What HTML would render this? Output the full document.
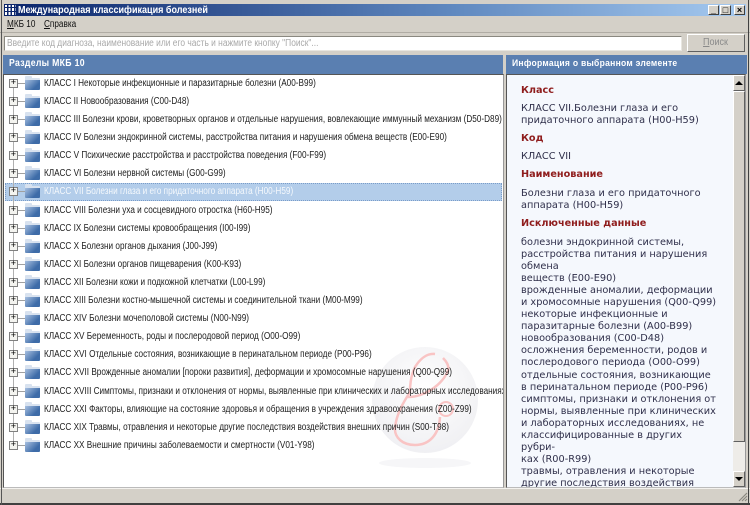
<!DOCTYPE html>
<html lang="ru"><head><meta charset="utf-8"><title>Международная классификация болезней</title>
<style>
html,body{margin:0;padding:0;width:750px;height:505px;overflow:hidden;background:#d4d0c8}
*{box-sizing:border-box}
body{font-family:"Liberation Sans",sans-serif;position:relative}
.a{position:absolute}
.t{position:absolute;white-space:nowrap;transform-origin:0 50%}
#title{left:4px;top:4px;width:742px;height:12px;background:linear-gradient(90deg,#0a246a,#5f88bf 60%,#a6caf0)}
.wb{position:absolute;top:5px;width:11px;height:10px;background:#d4d0c8;border:1px solid;border-color:#fff #404040 #404040 #fff;color:#000;font-size:9px;line-height:8px;text-align:center;font-weight:bold}
.row{position:absolute;left:44px;width:560px;overflow:hidden;height:14px;font-size:10px;line-height:14px;white-space:nowrap;color:#222;transform:scaleX(.82);transform-origin:0 50%}
.f{position:absolute;left:25px;width:15px;height:12px;border-radius:1px;background:linear-gradient(135deg,#a8c0e0,#3e6ca8 70%);border-top:2px solid #d8e2ef}
.f:before{content:"";position:absolute;left:0;top:-4px;width:7px;height:3px;background:#d8e2ef;border-radius:1px 1px 0 0}
.p{position:absolute;left:9px;width:9px;height:9px;border:1px solid #808080;background:#f4f4f0;color:#000;font:9px/7px "Liberation Mono",monospace;text-align:center}
.d{position:absolute;left:18px;width:7px;height:1px;background:#a0a0a0}
.h{position:absolute;left:521px;font:bold 9.7px/12px "DejaVu Sans",sans-serif;color:#8f1d1d;white-space:nowrap}
.b{position:absolute;left:521px;font:9.75px/12.05px "DejaVu Sans",sans-serif;color:#2f2f4a;white-space:nowrap}
</style></head><body>

<div class="a" id="title"></div>
<div class="a" style="left:5px;top:5px;width:11px;height:10px;background:repeating-linear-gradient(90deg,#fff 0 2px,transparent 2px 3.5px)"></div>
<div class="a" style="left:5px;top:7px;width:11px;height:1px;background:#0a246a"></div>
<div class="a" style="left:5px;top:11px;width:11px;height:1px;background:#0a246a"></div>
<div class="t" style="left:18px;top:3px;font:bold 10.5px/14px 'Liberation Sans',sans-serif;color:#fff;transform:scaleX(.86)">Международная классификация болезней</div>
<div class="wb" style="left:708px">_</div><div class="wb" style="left:720px">□</div><div class="wb" style="left:734px">×</div>

<div class="t" style="left:7px;top:17px;font-size:10px;line-height:15px;color:#111;transform:scaleX(.82)"><u>М</u>КБ 10</div>
<div class="t" style="left:44px;top:17px;font-size:10px;line-height:15px;color:#111;transform:scaleX(.82)"><u>С</u>правка</div>
<div class="a" style="left:0;top:32px;width:750px;height:1px;background:#b0aca4"></div>

<div class="a" style="left:4px;top:36px;width:678px;height:15px;background:#fff;border:1px solid;border-color:#8a8880 #e8e6e0 #e8e6e0 #8a8880"></div>
<div class="t" style="left:7px;top:36px;font-size:10px;line-height:15px;color:#a9a9a9;transform:scaleX(.84)">Введите код диагноза, наименование или его часть и нажмите кнопку "Поиск"...</div>
<div class="a" style="left:687px;top:34px;width:58px;height:18px;background:#d4d0c8;border:1px solid;border-color:#fff #606060 #606060 #fff"></div>
<div class="t" style="left:703px;top:36px;font-size:10px;line-height:14px;color:#8a8a8a;transform:scaleX(.9)"><u>П</u>оиск</div>

<div class="a" style="left:3px;top:55px;width:500px;height:19px;background:#5a7fb1"></div>
<div class="t" style="left:9px;top:56px;font:bold 10px/16px 'Liberation Sans',sans-serif;color:#fff;letter-spacing:.35px;transform:scaleX(.87)">Разделы МКБ 10</div>
<div class="a" style="left:506px;top:55px;width:241px;height:19px;background:#5a7fb1"></div>
<div class="t" style="left:512px;top:56px;font:bold 9.5px/16px 'Liberation Sans',sans-serif;color:#fff;letter-spacing:.3px;transform:scaleX(.9)">Информация о выбранном элементе</div>

<div class="a" style="left:3px;top:74px;width:501px;height:414px;background:#fff;border:1px solid;border-color:#555 #999 #bbb #555;overflow:hidden"></div>

<svg class="a" style="left:355px;top:335px" width="130" height="140" viewBox="0 0 130 140">
<defs><radialGradient id="g" cx=".5" cy=".4" r=".6"><stop offset="0" stop-color="#fff"/><stop offset="1" stop-color="#f0f0f3"/></radialGradient></defs>
<ellipse cx="70" cy="128" rx="46" ry="5" fill="#f6f6f8"/>
<circle cx="70" cy="65" r="53" fill="url(#g)"/>
<path d="M80 19C72 18 65 24 60 32C56 40 55 50 55 57C48 68 42 78 40 92C39 103 48 110 60 110C74 110 84 100 85 82M88 23C93 28 95 33 92 38C88 46 78 56 65 60C60 62 56 62 52 62" fill="none" stroke="#f9c4c4" stroke-width="2.5"/>
<circle cx="91" cy="74" r="7" fill="none" stroke="#f9c4c4" stroke-width="2"/>
</svg>

<div class="a" style="left:5px;top:183px;width:497px;height:18px;background:#b3cdea;border:1px dotted #7a9cc8"></div>
<div class="a" style="left:13px;top:83px;width:1px;height:362px;background:#b0b0b0"></div>

<div class="p" style="top:79px">+</div><div class="d" style="top:83px"></div><div class="f" style="top:78px"></div><div class="row" style="top:77px">КЛАСС I Некоторые инфекционные и паразитарные болезни (A00-B99)</div>
<div class="p" style="top:97px">+</div><div class="d" style="top:101px"></div><div class="f" style="top:96px"></div><div class="row" style="top:95px">КЛАСС II Новообразования (C00-D48)</div>
<div class="p" style="top:115px">+</div><div class="d" style="top:119px"></div><div class="f" style="top:114px"></div><div class="row" style="top:113px">КЛАСС III Болезни крови, кроветворных органов и отдельные нарушения, вовлекающие иммунный механизм (D50-D89)</div>
<div class="p" style="top:133px">+</div><div class="d" style="top:137px"></div><div class="f" style="top:132px"></div><div class="row" style="top:131px">КЛАСС IV Болезни эндокринной системы, расстройства питания и нарушения обмена веществ (E00-E90)</div>
<div class="p" style="top:151px">+</div><div class="d" style="top:155px"></div><div class="f" style="top:150px"></div><div class="row" style="top:149px">КЛАСС V Психические расстройства и расстройства поведения (F00-F99)</div>
<div class="p" style="top:169px">+</div><div class="d" style="top:173px"></div><div class="f" style="top:168px"></div><div class="row" style="top:167px">КЛАСС VI Болезни нервной системы (G00-G99)</div>
<div class="p" style="top:187px">+</div><div class="d" style="top:191px"></div><div class="f" style="top:186px"></div><div class="row" style="top:185px;color:#f4f8fc">КЛАСС VII Болезни глаза и его придаточного аппарата (H00-H59)</div>
<div class="p" style="top:206px">+</div><div class="d" style="top:210px"></div><div class="f" style="top:205px"></div><div class="row" style="top:204px">КЛАСС VIII Болезни уха и сосцевидного отростка (H60-H95)</div>
<div class="p" style="top:224px">+</div><div class="d" style="top:228px"></div><div class="f" style="top:223px"></div><div class="row" style="top:222px">КЛАСС IX Болезни системы кровообращения (I00-I99)</div>
<div class="p" style="top:242px">+</div><div class="d" style="top:246px"></div><div class="f" style="top:241px"></div><div class="row" style="top:240px">КЛАСС X Болезни органов дыхания (J00-J99)</div>
<div class="p" style="top:260px">+</div><div class="d" style="top:264px"></div><div class="f" style="top:259px"></div><div class="row" style="top:258px">КЛАСС XI Болезни органов пищеварения (K00-K93)</div>
<div class="p" style="top:278px">+</div><div class="d" style="top:282px"></div><div class="f" style="top:277px"></div><div class="row" style="top:276px">КЛАСС XII Болезни кожи и подкожной клетчатки (L00-L99)</div>
<div class="p" style="top:296px">+</div><div class="d" style="top:300px"></div><div class="f" style="top:295px"></div><div class="row" style="top:294px">КЛАСС XIII Болезни костно-мышечной системы и соединительной ткани (M00-M99)</div>
<div class="p" style="top:314px">+</div><div class="d" style="top:318px"></div><div class="f" style="top:313px"></div><div class="row" style="top:312px">КЛАСС XIV Болезни мочеполовой системы (N00-N99)</div>
<div class="p" style="top:332px">+</div><div class="d" style="top:336px"></div><div class="f" style="top:331px"></div><div class="row" style="top:330px">КЛАСС XV Беременность, роды и послеродовой период (O00-O99)</div>
<div class="p" style="top:350px">+</div><div class="d" style="top:354px"></div><div class="f" style="top:349px"></div><div class="row" style="top:348px">КЛАСС XVI Отдельные состояния, возникающие в перинатальном периоде (P00-P96)</div>
<div class="p" style="top:368px">+</div><div class="d" style="top:372px"></div><div class="f" style="top:367px"></div><div class="row" style="top:366px">КЛАСС XVII Врожденные аномалии [пороки развития], деформации и хромосомные нарушения (Q00-Q99)</div>
<div class="p" style="top:387px">+</div><div class="d" style="top:391px"></div><div class="f" style="top:386px"></div><div class="row" style="top:385px">КЛАСС XVIII Симптомы, признаки и отклонения от нормы, выявленные при клинических и лабораторных исследованиях</div>
<div class="p" style="top:405px">+</div><div class="d" style="top:409px"></div><div class="f" style="top:404px"></div><div class="row" style="top:403px">КЛАСС XXI Факторы, влияющие на состояние здоровья и обращения в учреждения здравоохранения (Z00-Z99)</div>
<div class="p" style="top:423px">+</div><div class="d" style="top:427px"></div><div class="f" style="top:422px"></div><div class="row" style="top:421px">КЛАСС XIX Травмы, отравления и некоторые другие последствия воздействия внешних причин (S00-T98)</div>
<div class="p" style="top:441px">+</div><div class="d" style="top:445px"></div><div class="f" style="top:440px"></div><div class="row" style="top:439px">КЛАСС XX Внешние причины заболеваемости и смертности (V01-Y98)</div>

<div class="a" style="left:506px;top:74px;width:240px;height:414px;background:#f5f8fd;border:1px solid;border-color:#555 #999 #bbb #555;overflow:hidden"></div>
<div class="h" style="top:85px">Класс</div>
<div class="b" style="top:103px">КЛАСС VII.Болезни глаза и его<br>придаточного аппарата (H00-H59)</div>
<div class="h" style="top:133px">Код</div>
<div class="b" style="top:151px">КЛАСС VII</div>
<div class="h" style="top:169px">Наименование</div>
<div class="b" style="top:188px">Болезни глаза и его придаточного<br>аппарата (H00-H59)</div>
<div class="h" style="top:218px">Исключенные данные</div>
<div class="a" style="left:507px;top:234px;width:226px;height:253px;overflow:hidden">
<div class="b" style="left:14px;top:3px">болезни эндокринной системы,<br>расстройства питания и нарушения<br>обмена<br>веществ (E00-E90)<br>врожденные аномалии, деформации<br>и хромосомные нарушения (Q00-Q99)<br>некоторые инфекционные и<br>паразитарные болезни (A00-B99)<br>новообразования (C00-D48)<br>осложнения беременности, родов и<br>послеродового периода (O00-O99)<br>отдельные состояния, возникающие<br>в перинатальном периоде (P00-P96)<br>симптомы, признаки и отклонения от<br>нормы, выявленные при клинических<br>и лабораторных исследованиях, не<br>классифицированные в других<br>рубри-<br>ках (R00-R99)<br>травмы, отравления и некоторые<br>другие последствия воздействия</div>
</div>

<div class="a" style="left:733px;top:75px;width:12px;height:412px;background:#eeece8"></div>
<div class="a" style="left:733px;top:75px;width:12px;height:16px;background:#d4d0c8;border:1px solid;border-color:#fff #606060 #606060 #fff"></div>
<div class="a" style="left:735px;top:81px;width:0;height:0;border-left:4px solid transparent;border-right:4px solid transparent;border-bottom:4px solid #000"></div>
<div class="a" style="left:733px;top:91px;width:12px;height:351px;background:#d4d0c8;border:1px solid;border-color:#fff #606060 #606060 #fff"></div>
<div class="a" style="left:733px;top:471px;width:12px;height:16px;background:#d4d0c8;border:1px solid;border-color:#fff #606060 #606060 #fff"></div>
<div class="a" style="left:735px;top:477px;width:0;height:0;border-left:4px solid transparent;border-right:4px solid transparent;border-top:4px solid #000"></div>

<div class="a" style="left:0;top:488px;width:750px;height:15px;background:#d4d0c8;border-top:1px solid #f4f2ee"></div>
<svg class="a" style="left:737px;top:491px" width="11" height="11" viewBox="0 0 11 11"><path d="M10 2L2 10M10 5L5 10M10 8L8 10" stroke="#8a8880" stroke-width="1.2"/></svg>
<div class="a" style="left:0;top:503px;width:750px;height:2px;background:#404040"></div>
<div class="a" style="left:1px;top:0;width:1px;height:505px;background:#555"></div>
<div class="a" style="left:748px;top:0;width:1px;height:505px;background:#404040"></div>
</body></html>
